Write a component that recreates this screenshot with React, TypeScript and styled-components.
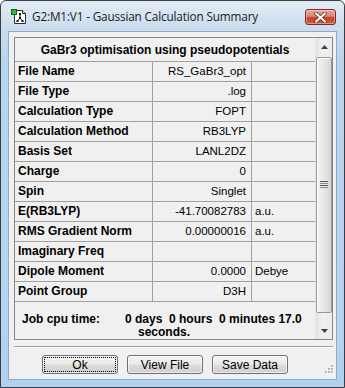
import React from "react";
import styled, { createGlobalStyle } from "styled-components";

const GlobalStyle = createGlobalStyle`
  html, body {
    margin: 0;
    padding: 0;
    background: #ffffff;
  }
  body {
    font-family: "Liberation Sans", Arial, sans-serif;
  }
`;

const Window = styled.div`
  width: 345px;
  height: 388px;
  box-sizing: border-box;
  border: 1px solid #3a3d42;
  border-radius: 6px 6px 0 0;
  background: linear-gradient(
    to bottom,
    #e2ebf5 0px,
    #c9dbee 30px,
    #b8d5f0 60px,
    #b0d2f1 100%
  );
  padding: 0 7px 7px 7px;
  display: flex;
  flex-direction: column;
`;

const TitleBar = styled.div`
  height: 30px;
  display: flex;
  align-items: center;
  padding-left: 3px;
`;

const TitleText = styled.span`
  margin-left: 4px;
  font-family: "Open Sans", "Noto Sans", sans-serif;
  font-size: 11.75px;
  color: #1b1b1b;
  letter-spacing: -0.15px;
`;

const CloseButton = styled.div`
  margin-left: auto;
  margin-right: 1px;
  margin-top: 2px;
  width: 31px;
  height: 16px;
  box-sizing: border-box;
  border: 1px solid #7a2b22;
  border-radius: 3px;
  background: linear-gradient(
    to bottom,
    #eba99c 0%,
    #dc8370 45%,
    #c8412a 55%,
    #d45c43 100%
  );
  box-shadow: inset 0 0 0 1px rgba(255, 255, 255, 0.35);
  display: flex;
  align-items: center;
  justify-content: center;
`;

const Client = styled.div`
  flex: 1;
  background: #f0f0f0;
  border: 1px solid #97a9bd;
  display: flex;
  flex-direction: column;
`;

const TableBox = styled.div`
  margin: 5px 3px 0 5px;
  height: 303px;
  box-sizing: border-box;
  border: 1px solid #828790;
  display: flex;
  background: #f0f0f0;
`;

const Grid = styled.div`
  flex: 1;
  display: flex;
  flex-direction: column;
`;

const HeaderRow = styled.div`
  height: 25px;
  border-bottom: 1px solid #a0a0a0;
  display: flex;
  align-items: center;
  justify-content: center;
  font-weight: bold;
  font-size: 12px;
  color: #000;
`;

const Row = styled.div`
  height: 19px;
  border-bottom: 1px solid #a0a0a0;
  display: grid;
  grid-template-columns: 137px 98px 1fr;
  column-gap: 1px;
  background: #a0a0a0;
`;

const Cell = styled.div<{ $kind: "label" | "value" | "unit" }>`
  background: #f0f0f0;
  line-height: 19px;
  white-space: nowrap;
  overflow: hidden;
  color: #000;
  font-size: ${(p) => (p.$kind === "label" ? "12px" : "11.5px")};
  font-weight: ${(p) => (p.$kind === "label" ? "bold" : "normal")};
  text-align: ${(p) => (p.$kind === "value" ? "right" : "left")};
  padding: ${(p) =>
    p.$kind === "label" ? "0 0 0 3px" : p.$kind === "value" ? "0 5px 0 0" : "0 0 0 3px"};
`;

const CpuSection = styled.div`
  flex: 1;
  display: flex;
  padding: 11px 0 0 7px;
  font-weight: bold;
  font-size: 12px;
  line-height: 13px;
  color: #000;
`;

const CpuLabel = styled.div`
  width: 103px;
`;

const CpuValue = styled.div`
  white-space: pre;
`;

const CpuWrap = styled.div`
  padding-left: 13px;
`;

const Scrollbar = styled.div`
  width: 17px;
  display: flex;
  flex-direction: column;
  background: linear-gradient(to right, #e3e3e3, #f0f0f0 40%, #ececec);
  border-left: 1px solid #e8e8e8;
  box-sizing: border-box;
`;

const ArrowButton = styled.div`
  height: 17px;
  display: flex;
  align-items: center;
  justify-content: center;
`;

const Thumb = styled.div`
  margin: 2px 0 0 0;
  height: 256px;
  box-sizing: border-box;
  border: 1px solid #979797;
  border-radius: 2px;
  background: linear-gradient(to right, #f4f4f4 0%, #e9e9e9 45%, #d7d7d7 100%);
  box-shadow: inset 1px 1px 0 #ffffff;
  display: flex;
  align-items: center;
  justify-content: center;
`;

const Track = styled.div`
  flex: 1;
`;

const Separator = styled.div`
  margin: 6px 3px 0 5px;
  border-top: 1px solid #a0a0a0;
  border-bottom: 1px solid #ffffff;
`;

const Footer = styled.div`
  flex: 1;
  display: flex;
  align-items: flex-start;
  gap: 9px;
  padding: 7px 2px 2px 33px;
`;

const Button = styled.div<{ $focused?: boolean }>`
  width: 76px;
  height: 19px;
  box-sizing: border-box;
  border: 1px solid #707070;
  border-radius: 3px;
  background: linear-gradient(
    to bottom,
    #f2f2f2 0%,
    #ebebeb 48%,
    #dddddd 52%,
    #cfcfcf 100%
  );
  box-shadow: inset 0 0 0 1px rgba(255, 255, 255, 0.6);
  display: flex;
  align-items: center;
  justify-content: center;
  font-size: 12px;
  color: #000;
  outline: ${(p) => (p.$focused ? "1px dotted #000" : "none")};
  outline-offset: -3px;
`;

const Grip = styled.svg`
  margin-left: auto;
  align-self: flex-end;
  margin-bottom: 3px;
`;

const rows: [string, string, string][] = [
  ["File Name", "RS_GaBr3_opt", ""],
  ["File Type", ".log", ""],
  ["Calculation Type", "FOPT", ""],
  ["Calculation Method", "RB3LYP", ""],
  ["Basis Set", "LANL2DZ", ""],
  ["Charge", "0", ""],
  ["Spin", "Singlet", ""],
  ["E(RB3LYP)", "-41.70082783", "a.u."],
  ["RMS Gradient Norm", "0.00000016", "a.u."],
  ["Imaginary Freq", "", ""],
  ["Dipole Moment", "0.0000", "Debye"],
  ["Point Group", "D3H", ""],
];

const AppIcon = () => (
  <svg width="17" height="17" viewBox="0 0 17 17">
    <path d="M3.5 2.5h8l3 3v10h-11z" fill="#ffffff" stroke="#2b2b2b" />
    <path d="M11.5 2.5v3h3" fill="#dcdcdc" stroke="#2b2b2b" />
    <g stroke="#111" strokeWidth="1">
      <line x1="9" y1="6" x2="9" y2="10" />
      <line x1="9" y1="10" x2="6.5" y2="13" />
      <line x1="9" y1="10" x2="11.5" y2="13" />
    </g>
    <rect x="8" y="5" width="2" height="2" fill="#111" />
    <rect x="8" y="9" width="2" height="2" fill="#111" />
    <rect x="5.5" y="12" width="2" height="2" fill="#111" />
    <rect x="10.5" y="12" width="2" height="2" fill="#111" />
    <rect x="0.5" y="1.5" width="5" height="5" fill="#29c22f" stroke="#1b5e1e" />
  </svg>
);

const CloseGlyph = () => (
  <svg width="13" height="11" viewBox="0 0 13 11">
    <path
      d="M2 1.5l9 8M11 1.5l-9 8"
      stroke="#5a1e16"
      strokeWidth="3.6"
      strokeLinecap="round"
    />
    <path
      d="M2 1.5l9 8M11 1.5l-9 8"
      stroke="#ffffff"
      strokeWidth="2.2"
      strokeLinecap="round"
    />
  </svg>
);

const UpArrow = () => (
  <svg width="7" height="4" viewBox="0 0 7 4">
    <path d="M3.5 0L7 4H0z" fill="#3f3f3f" />
  </svg>
);

const DownArrow = () => (
  <svg width="7" height="4" viewBox="0 0 7 4">
    <path d="M0 0h7L3.5 4z" fill="#3f3f3f" />
  </svg>
);

const GripLines = () => (
  <svg width="8" height="8" viewBox="0 0 8 8">
    {[0, 2, 4, 6].map((y) => (
      <rect key={y} x="0" y={y} width="8" height="1" fill={y % 4 === 0 ? "#5a5a5a" : "#8c8c8c"} />
    ))}
  </svg>
);

const GripDots = () => (
  <Grip width="11" height="11" viewBox="0 0 11 11">
    {[
      [8, 2],
      [5, 5],
      [8, 5],
      [2, 8],
      [5, 8],
      [8, 8],
    ].map(([x, y]) => (
      <g key={`${x}-${y}`}>
        <rect x={x + 1} y={y + 1} width="2" height="2" fill="#ffffff" />
        <rect x={x} y={y} width="2" height="2" fill="#b4b4b4" />
      </g>
    ))}
  </Grip>
);

const App = () => {
  return (
    <>
      <GlobalStyle />
      <Window>
        <TitleBar>
          <AppIcon />
          <TitleText>G2:M1:V1 - Gaussian Calculation Summary</TitleText>
          <CloseButton>
            <CloseGlyph />
          </CloseButton>
        </TitleBar>

        <Client>
          <TableBox>
            <Grid>
              <HeaderRow>GaBr3 optimisation using pseudopotentials</HeaderRow>
              {rows.map(([label, value, unit]) => (
                <Row key={label}>
                  <Cell $kind="label">{label}</Cell>
                  <Cell $kind="value">{value}</Cell>
                  <Cell $kind="unit">{unit}</Cell>
                </Row>
              ))}
              <CpuSection>
                <CpuLabel>Job cpu time:</CpuLabel>
                <CpuValue>
                  {"0 days  0 hours  0 minutes 17.0"}
                  <CpuWrap>seconds.</CpuWrap>
                </CpuValue>
              </CpuSection>
            </Grid>
            <Scrollbar>
              <ArrowButton>
                <UpArrow />
              </ArrowButton>
              <Thumb>
                <GripLines />
              </Thumb>
              <Track />
              <ArrowButton>
                <DownArrow />
              </ArrowButton>
            </Scrollbar>
          </TableBox>

          <Separator />

          <Footer>
            <Button $focused>Ok</Button>
            <Button>View File</Button>
            <Button>Save Data</Button>
            <GripDots />
          </Footer>
        </Client>
      </Window>
    </>
  );
};

export default App;
